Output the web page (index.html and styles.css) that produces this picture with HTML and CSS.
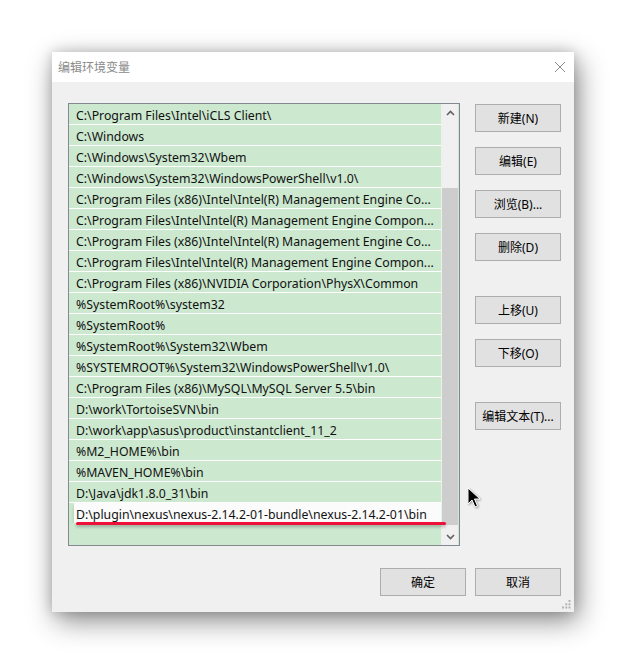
FILE: index.html
```html
<!DOCTYPE html>
<html lang="zh-CN">
<head>
<meta charset="utf-8">
<title>编辑环境变量</title>
<link rel="stylesheet" href="styles.css">
</head>
<body>
<div class="dialog">
  <div class="titlebar">
    <span class="title">编辑环境变量</span>
    <svg class="close" width="12" height="12" viewBox="0 0 12 12"><path d="M1 1 L11 11 M11 1 L1 11" stroke="#8c8c8c" stroke-width="1" fill="none"/></svg>
  </div>
  <div class="content">
    <div class="main">
      <div class="listbox">
        <div class="rows">
          <div class="row">C:\Program Files\Intel\iCLS Client\</div>
          <div class="row">C:\Windows</div>
          <div class="row">C:\Windows\System32\Wbem</div>
          <div class="row">C:\Windows\System32\WindowsPowerShell\v1.0\</div>
          <div class="row">C:\Program Files (x86)\Intel\Intel(R) Management Engine Co...</div>
          <div class="row">C:\Program Files\Intel\Intel(R) Management Engine Compon...</div>
          <div class="row">C:\Program Files (x86)\Intel\Intel(R) Management Engine Co...</div>
          <div class="row">C:\Program Files\Intel\Intel(R) Management Engine Compon...</div>
          <div class="row">C:\Program Files (x86)\NVIDIA Corporation\PhysX\Common</div>
          <div class="row">%SystemRoot%\system32</div>
          <div class="row">%SystemRoot%</div>
          <div class="row">%SystemRoot%\System32\Wbem</div>
          <div class="row">%SYSTEMROOT%\System32\WindowsPowerShell\v1.0\</div>
          <div class="row">C:\Program Files (x86)\MySQL\MySQL Server 5.5\bin</div>
          <div class="row">D:\work\TortoiseSVN\bin</div>
          <div class="row">D:\work\app\asus\product\instantclient_11_2</div>
          <div class="row">%M2_HOME%\bin</div>
          <div class="row">%MAVEN_HOME%\bin</div>
          <div class="row">D:\Java\jdk1.8.0_31\bin</div>
          <div class="row editing"><div class="edit">D:\plugin\nexus\nexus-2.14.2-01-bundle\nexus-2.14.2-01\bin</div></div>
        </div>
        <div class="scrollbar">
          <div class="arrow">
            <svg width="9" height="6" viewBox="0 0 9 6"><path d="M1 5 L4.5 1.5 L8 5" stroke="#606060" stroke-width="1.6" fill="none"/></svg>
          </div>
          <div class="track"><div class="thumb"></div></div>
          <div class="arrow">
            <svg width="9" height="6" viewBox="0 0 9 6"><path d="M1 1 L4.5 4.5 L8 1" stroke="#606060" stroke-width="1.6" fill="none"/></svg>
          </div>
        </div>
        <div class="annot"></div>
      </div>
      <div class="btncol">
        <button class="btn">新建(N)</button>
        <button class="btn">编辑(E)</button>
        <button class="btn">浏览(B)...</button>
        <button class="btn">删除(D)</button>
        <button class="btn sep">上移(U)</button>
        <button class="btn">下移(O)</button>
        <button class="btn sep">编辑文本(T)...</button>
      </div>
    </div>
    <div class="footer">
      <button class="btn">确定</button>
      <button class="btn">取消</button>
    </div>
  </div>
  <svg class="grip" width="9" height="9" viewBox="0 0 9 9">
    <rect x="6.5" y="0" width="2" height="2" fill="#b4b4b4"/>
    <rect x="3.3" y="3.3" width="2" height="2" fill="#b4b4b4"/>
    <rect x="6.5" y="3.3" width="2" height="2" fill="#b4b4b4"/>
    <rect x="0" y="6.5" width="2" height="2" fill="#b4b4b4"/>
    <rect x="3.3" y="6.5" width="2" height="2" fill="#b4b4b4"/>
    <rect x="6.5" y="6.5" width="2" height="2" fill="#b4b4b4"/>
  </svg>
</div>
<svg class="cursor" width="16" height="24" viewBox="0 0 16 24">
  <path d="M1 1 L1 17 L5 13 L8 20 L10.5 19 L7.5 12 L13 12 Z" fill="#000" stroke="#fff" stroke-width="1" stroke-linejoin="miter"/>
</svg>
</body>
</html>
```
FILE: styles.css
```css
html, body {
  margin: 0;
  padding: 0;
  background: #ffffff;
}
body {
  width: 626px;
  height: 666px;
  overflow: hidden;
  position: relative;
  font-family: "Noto Sans", "Noto Sans CJK SC", sans-serif;
  font-size: 12px;
  color: #000;
}
.dialog {
  position: relative;
  margin: 52px 0 0 52px;
  width: 522px;
  height: 560px;
  background: #f0f0f0;
  box-shadow: 4px 9px 26px rgba(0,0,0,0.45), 0 0 12px rgba(0,0,0,0.18);
  display: flex;
  flex-direction: column;
}
.titlebar {
  height: 30px;
  background: #ffffff;
  display: flex;
  align-items: center;
  justify-content: space-between;
  padding: 0 8px 0 6px;
  flex: none;
}
.title {
  color: #8a8a8a;
  font-size: 12px;
  font-family: "Noto Sans CJK SC", sans-serif;
  position: relative;
  top: -1px;
}
.close {
  display: block;
}
.content {
  padding: 21px 13px 0 16px;
  flex: 1;
}
.main {
  display: flex;
  gap: 15px;
  align-items: flex-start;
}
.listbox {
  position: relative;
  width: 390px;
  height: 441px;
  border: 1px solid #828790;
  background: #cce8cf;
  display: grid;
  grid-template-columns: 372px 17px;
}
.rows {
  display: flex;
  flex-direction: column;
  overflow: hidden;
}
.row {
  height: 20px;
  line-height: 24px;
  font-size: 12.3px;
  border-bottom: 1px solid #ffffff;
  padding-left: 7px;
  white-space: nowrap;
  overflow: hidden;
  flex: none;
  color: #111;
}
.row.editing {
  padding-left: 5px;
  border-bottom: none;
}
.edit {
  background: #fbfbfb;
  height: 20px;
  line-height: 24px;
  padding-left: 2px;
  overflow: hidden;
  box-shadow: 0 3px 4px rgba(0,0,0,0.15);
}
.scrollbar {
  background: #f0f0f0;
  border-left: 1px solid #e8f4ea;
  display: flex;
  flex-direction: column;
}
.arrow {
  height: 17px;
  display: flex;
  align-items: center;
  justify-content: center;
  flex: none;
}
.arrow svg { display: block; }
.track {
  flex: 1;
  padding-top: 67px;
}
.thumb {
  height: 337px;
  background: #cdcdcd;
}
.annot {
  position: absolute;
  left: 7px;
  top: 418px;
  width: 370px;
  height: 3px;
  background: #ee1238;
  border-radius: 2px;
  box-shadow: 0 2px 3px rgba(0,0,0,0.25);
}
.btncol {
  display: flex;
  flex-direction: column;
  gap: 15px;
  padding-top: 1px;
}
.btn {
  width: 86px;
  height: 28px;
  margin: 0;
  padding: 0;
  border: 1px solid #adadad;
  background: #e1e1e1;
  font-family: "Noto Sans", "Noto Sans CJK SC", sans-serif;
  font-size: 12px;
  color: #000;
  box-sizing: border-box;
}
.btn.sep {
  margin-top: 20px;
}
.footer {
  display: flex;
  justify-content: flex-end;
  gap: 9px;
  margin-top: 22px;
}
.grip {
  position: absolute;
  right: 3px;
  bottom: 3px;
}
.cursor {
  position: absolute;
  left: 467px;
  top: 487px;
  filter: drop-shadow(1px 1px 1px rgba(0,0,0,0.35));
}
```
